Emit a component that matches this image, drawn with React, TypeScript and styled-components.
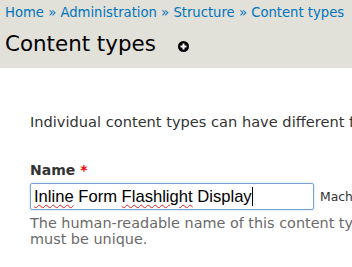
import React from "react";
import styled, { createGlobalStyle } from "styled-components";

const GlobalStyle = createGlobalStyle`
    html, body {
        margin: 0;
        padding: 0;
        background: #ffffff;
        overflow: hidden;
    }
    body {
        font-family: "DejaVu Sans", Verdana, sans-serif;
    }
`;

const Page = styled.div`
    width: 352px;
    height: 267px;
    overflow: hidden;
`;

const Header = styled.div`
    background: #e1e0d9;
    padding: 4px 5px 0;
    height: 64px;
    white-space: nowrap;
`;

const Breadcrumb = styled.div`
    font-size: 13.2px;
    line-height: 18px;
    color: #0074bd;
`;

const Crumb = styled.a`
    color: #0074bd;
    text-decoration: none;
`;

const TitleRow = styled.div`
    display: flex;
    align-items: center;
    gap: 22px;
    margin-top: 9px;
`;

const Title = styled.h1`
    margin: 0;
    font-family: "DejaVu Sans", sans-serif;
    font-weight: normal;
    font-size: 21.4px;
    line-height: 26px;
    color: #000;
`;

const AddIcon = styled.svg`
    width: 11px;
    height: 11px;
    margin-top: 4px;
`;

const Content = styled.div`
    padding: 45px 0 0 30px;
    white-space: nowrap;
`;

const Intro = styled.p`
    margin: 0;
    font-size: 14.6px;
    line-height: 18px;
    color: #333;
`;

const Field = styled.div`
    margin-top: 30px;
`;

const Label = styled.label`
    display: block;
    font-size: 14px;
    font-weight: bold;
    line-height: 18px;
    color: #333;
`;

const Required = styled.span`
    color: #e00;
`;

const InputRow = styled.div`
    display: flex;
    align-items: center;
    gap: 6px;
    margin-top: 4px;
`;

const TextBox = styled.div`
    box-sizing: border-box;
    flex: 0 0 284px;
    height: 27px;
    border: 1px solid #7aa2d4;
    border-radius: 2px;
    box-shadow: 0 0 2px #a9c4e6;
    padding: 0 3px;
    display: flex;
    align-items: center;
    font-family: "Liberation Sans", Arial, sans-serif;
    font-size: 16.6px;
    color: #000;
`;

const Misspelled = styled.span`
    text-decoration: underline wavy #e02020;
    text-decoration-thickness: 1px;
    text-underline-offset: 2px;
`;

const Caret = styled.span`
    display: inline-block;
    width: 1px;
    height: 19px;
    background: #000;
`;

const MachineName = styled.span`
    font-size: 12.4px;
    color: #333;
`;

const Description = styled.div`
    margin-top: 5px;
    font-size: 14.4px;
    line-height: 16px;
    color: #6a6a6a;
`;

export default function App() {
    return (
        <Page>
            <GlobalStyle />
            <Header>
                <Breadcrumb>
                    <Crumb href="#">Home</Crumb> » <Crumb href="#">Administration</Crumb> »{" "}
                    <Crumb href="#">Structure</Crumb> » <Crumb href="#">Content types</Crumb>
                </Breadcrumb>
                <TitleRow>
                    <Title>Content types</Title>
                    <AddIcon viewBox="0 0 11 11">
                        <circle cx="5.5" cy="5.5" r="5.5" fill="#000" />
                        <path d="M5.5 2.5v6M2.5 5.5h6" stroke="#fff" strokeWidth="2" />
                    </AddIcon>
                </TitleRow>
            </Header>
            <Content>
                <Intro>Individual content types can have different fields, behaviors, and permissions assigned to them.</Intro>
                <Field>
                    <Label>
                        Name <Required>*</Required>
                    </Label>
                    <InputRow>
                        <TextBox>
                            <span>
                                <Misspelled>Inline</Misspelled> Form <Misspelled>Flashlight</Misspelled> Display
                            </span>
                            <Caret />
                        </TextBox>
                        <MachineName>Machine name: inline_form_flashlight_display</MachineName>
                    </InputRow>
                    <Description>
                        The human-readable name of this content type. This text will be displayed
                        <br />
                        must be unique.
                    </Description>
                </Field>
            </Content>
        </Page>
    );
}
